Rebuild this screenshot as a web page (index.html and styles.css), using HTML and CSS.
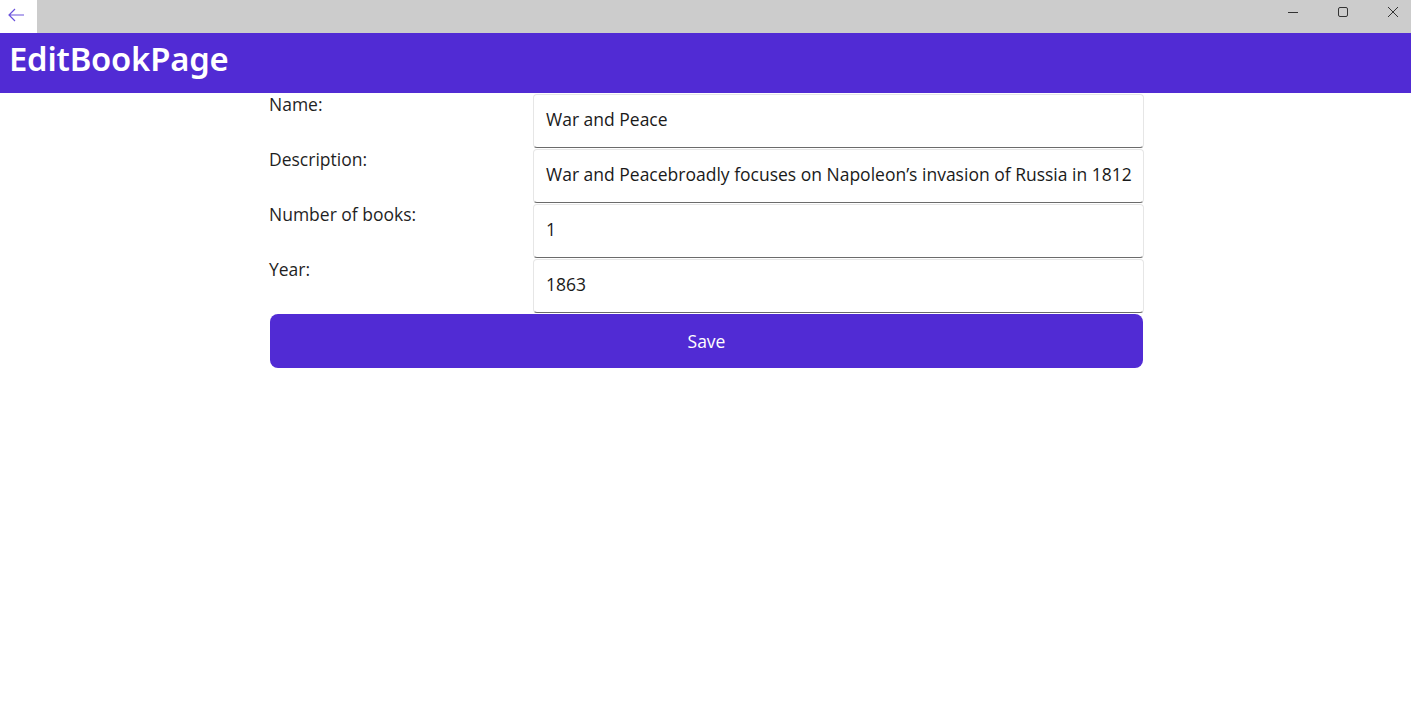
FILE: index.html
```html
<!DOCTYPE html>
<html>
<head>
<meta charset="utf-8">
<link rel="stylesheet" href="styles.css">
</head>
<body>
<div class="titlebar">
  <div class="back">
    <svg width="18" height="14" viewBox="0 0 18 14"><path d="M8 1 L2 7 L8 13 M2 7 H17" fill="none" stroke="#6a52dc" stroke-width="1.2"/></svg>
  </div>
  <div class="drag"></div>
  <div class="ctrl">
    <svg width="12" height="12" viewBox="0 0 12 12"><path d="M1 6.5 H11" stroke="#333" stroke-width="1"/></svg>
  </div>
  <div class="ctrl">
    <svg width="12" height="12" viewBox="0 0 12 12"><rect x="1.5" y="1.5" width="9" height="9" rx="1.5" fill="none" stroke="#333" stroke-width="1"/></svg>
  </div>
  <div class="ctrl">
    <svg width="12" height="12" viewBox="0 0 12 12"><path d="M1 1 L11 11 M11 1 L1 11" stroke="#333" stroke-width="1"/></svg>
  </div>
</div>
<div class="header">EditBookPage</div>
<div class="content">
  <div class="form">
    <div class="label">Name:</div>
    <div class="entry">War and Peace</div>
    <div class="label">Description:</div>
    <div class="entry">War and Peacebroadly focuses on Napoleon’s invasion of Russia in 1812</div>
    <div class="label">Number of books:</div>
    <div class="entry">1</div>
    <div class="label">Year:</div>
    <div class="entry">1863</div>
  </div>
  <button class="save">Save</button>
</div>
</body>
</html>
```
FILE: styles.css
```css
html, body {
  margin: 0;
  padding: 0;
  background: #ffffff;
  font-family: "Open Sans", "Noto Sans", sans-serif;
  color: #1a1a1a;
}
.titlebar {
  display: flex;
  height: 33px;
  background: #cccccc;
}
.back {
  width: 37px;
  background: #ffffff;
  display: flex;
  align-items: center;
  justify-content: center;
  padding-right: 6px;
  padding-bottom: 3px;
  box-sizing: border-box;
}
.drag { flex: 1; }
.ctrl {
  width: 50px;
  display: flex;
  align-items: center;
  justify-content: center;
  padding-left: 14px;
  padding-bottom: 9px;
  box-sizing: border-box;
}
.header {
  height: 60px;
  background: #512bd4;
  color: #ffffff;
  font-family: "Noto Sans", "Open Sans", sans-serif;
  font-weight: 600;
  font-size: 32.8px;
  line-height: 52px;
  padding-left: 9px;
  letter-spacing: -0.2px;
}
.content {
  width: 875px;
  margin: 0 auto;
  padding-left: 2px;
}
.form {
  display: grid;
  grid-template-columns: 264px 611px;
  grid-auto-rows: 55px;
}
.label {
  font-size: 17.5px;
  line-height: 23px;
  color: #1f1f1f;
}
.entry {
  margin-top: 1px;
  height: 54px;
  box-sizing: border-box;
  border: 1px solid #e6e6e6;
  border-bottom: 1px solid #6b6b6b;
  border-radius: 4px;
  padding: 0 0 0 12px;
  font-size: 17.5px;
  line-height: 49px;
  color: #1a1a1a;
  white-space: nowrap;
  overflow: hidden;
}
.save {
  display: block;
  width: 873px;
  height: 54px;
  margin: 1px 0 0 1px;
  background: #512bd4;
  border: none;
  border-radius: 8px;
  color: #ffffff;
  font-family: "Open Sans", "Noto Sans", sans-serif;
  font-size: 17.5px;
  padding: 0;
}
```
